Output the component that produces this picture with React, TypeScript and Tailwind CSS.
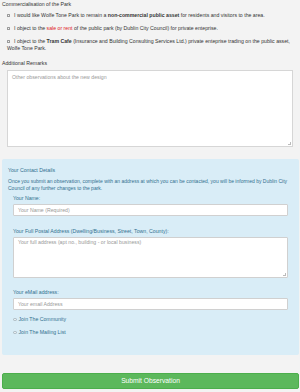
import type { FC } from 'react';

const Box: FC = () => (
  <span className="inline-block w-[3px] h-[3px] border-[0.5px] border-[#9a9a9a] bg-[#f4f4f4] rounded-[0.5px] mr-[4px] align-middle" />
);

const Round: FC = () => (
  <span className="inline-block w-[3.5px] h-[3.5px] border-[0.5px] border-[#a8b7bf] bg-[#e8eef1] rounded-full mr-[2px] align-middle" />
);

const App: FC = () => {
  return (
    <div className="w-[300px] h-[392px] overflow-hidden bg-[#f3f3f3] text-[#333] text-[5.2px] leading-[7px] font-['Liberation_Sans',Arial,sans-serif]">
      <div className="pt-[1px] pl-[2px]">Commercialisation of the Park</div>

      <div className="pl-[7px] pr-[6px]">
        <div className="mt-[4px]">
          <Box />I would like Wolfe Tone Park to remain a <b>non-commercial public asset</b> for residents and visitors to the area.
        </div>
        <div className="mt-[6px]">
          <Box />I object to the <span className="text-[#e0191b]">sale or rent</span> of the public park (by Dublin City Council) for private enteprise.
        </div>
        <div className="mt-[6px]">
          <Box />I object to the <b>Tram Cafe</b> (Insurance and Building Consulting Services Ltd.) private enteprise trading on the public asset, Wolfe Tone Park.
        </div>
      </div>

      <div className="mt-[8px] pl-[2px]">Additional Remarks</div>
      <div className="ml-[7px] mr-[7px] mt-[3px] h-[77px] bg-white border border-[#d6d6d6] px-[4px] pt-[3px] text-[#999] relative">
        Other observations about the new design
        <span className="absolute right-[1px] bottom-[1px] w-[3px] h-[3px] border-r border-b border-[#bbb]" />
      </div>

      <div className="mt-[12px] ml-[2px] mr-[1px] h-[196px] bg-[#d9edf7] rounded-[2px] text-[#31708f] pl-[6px] pr-[3px] pt-[8px]">
        <div>Your Contact Details</div>
        <div className="mt-[4px] text-[5px]">
          Once you submit an observation, complete with an address at which you can be contacted, you will be informed by Dublin City Council of any further changes to the park.
        </div>
        <div className="pl-[5px] pr-[8px]">
          <div className="mt-[3px]">Your Name:</div>
          <div className="mt-[2px] h-[12px] bg-white border border-[#d0d0d0] rounded-[1px] px-[4px] leading-[10px] text-[#999]">
            Your Name (Required)
          </div>

          <div className="mt-[12px]">Your Full Postal Address (Dwelling/Business, Street, Town, County):</div>
          <div className="mt-[2px] h-[41px] bg-white border border-[#d0d0d0] rounded-[1px] px-[4px] pt-[1px] text-[#999] relative">
            Your full address (apt no., building - or local business)
            <span className="absolute right-[1px] bottom-[1px] w-[3px] h-[3px] border-r border-b border-[#bbb]" />
          </div>

          <div className="mt-[11px]">Your eMail address:</div>
          <div className="mt-[2px] h-[12px] bg-white border border-[#d0d0d0] rounded-[1px] px-[4px] leading-[10px] text-[#999]">
            Your email Address
          </div>

          <div className="mt-[6px]">
            <Round />Join The Community
          </div>
          <div className="mt-[6px]">
            <Round />Join The Mailing List
          </div>
        </div>
      </div>

      <div className="mt-[18px] ml-[2px] mr-[1px] h-[16px] bg-[#5cb85c] border border-[#4cae4c] rounded-[2px] text-white text-[6.7px] leading-[14px] text-center">
        Submit Observation
      </div>
    </div>
  );
};

export default App;
